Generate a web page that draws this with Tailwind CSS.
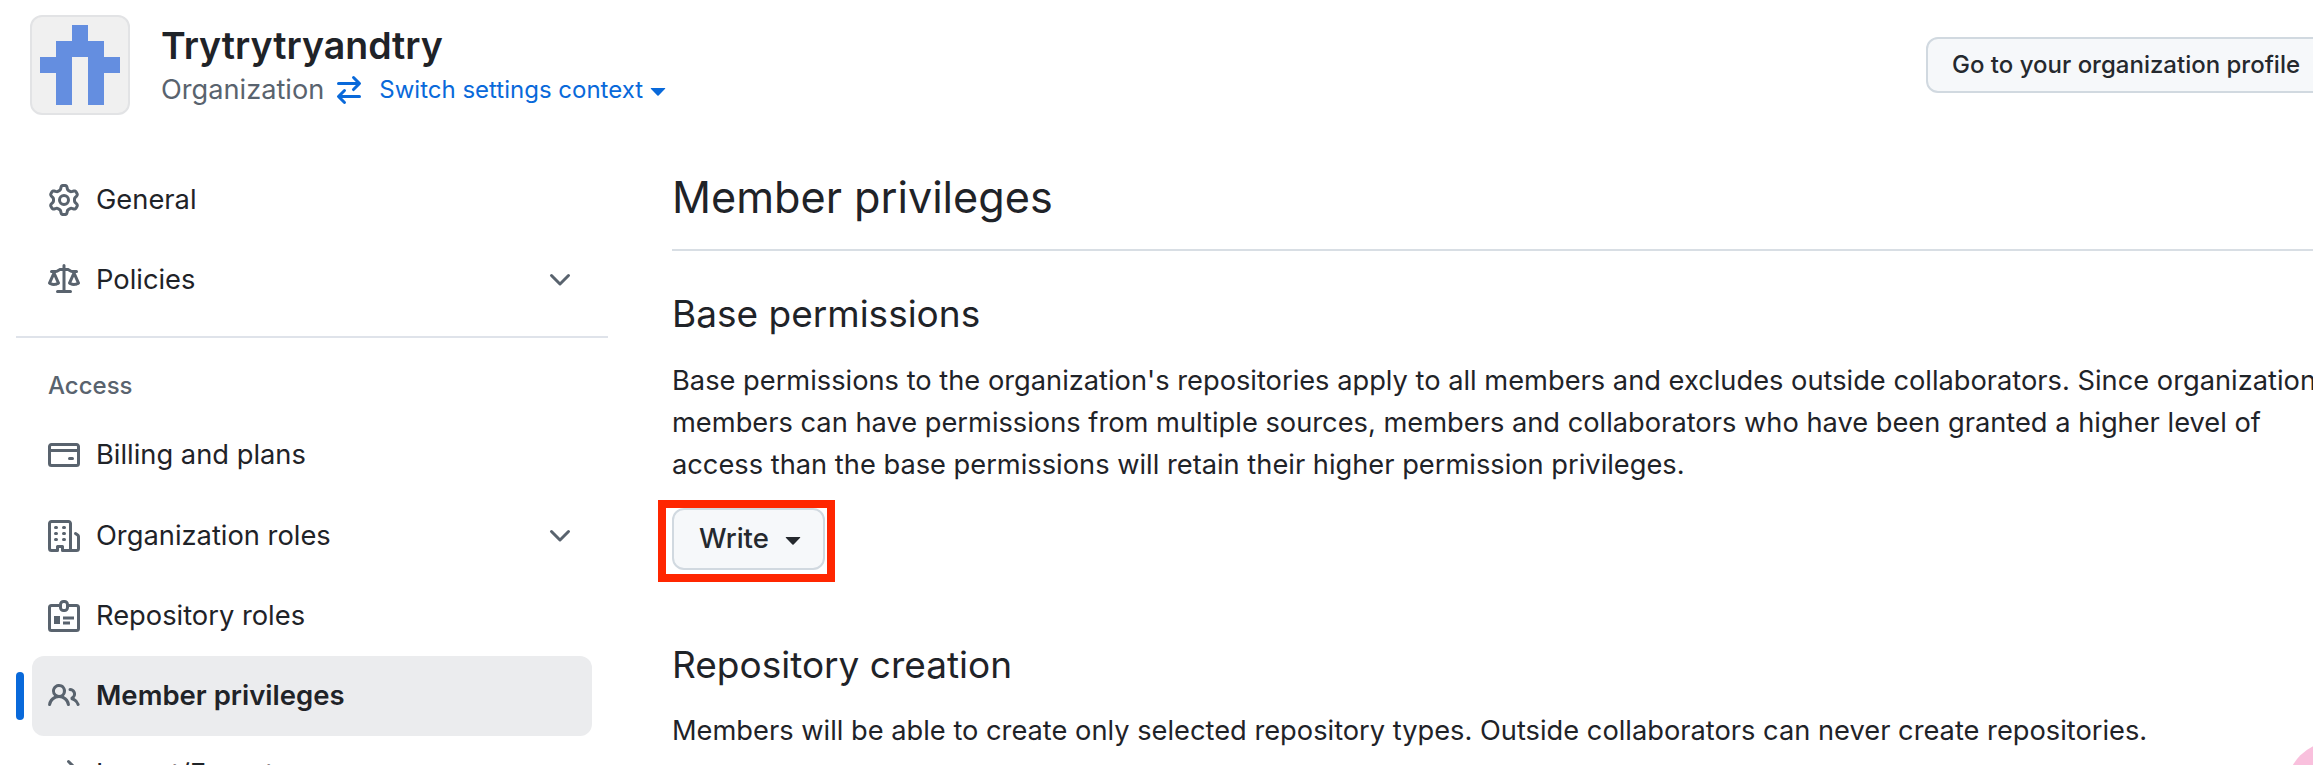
<!DOCTYPE html>
<html lang="en">
<head>
  <meta charset="UTF-8">
  <title>Member privileges</title>
  <script src="https://cdn.jsdelivr.net/npm/@tailwindcss/browser@4"></script>
</head>
<body class="bg-white font-['Inter',sans-serif] text-[#1f2328]">
<div class="relative h-[765px] w-[2313px] overflow-hidden">

  <!-- header -->
  <header class="flex h-[125px] items-start pl-[30px] pt-[15px]">
    <div class="flex h-[100px] w-[100px] shrink-0 items-center justify-center rounded-[12px] border-2 border-[#e2e3e5] bg-[#f0f0f0]">
      <svg width="80" height="80" viewBox="0 0 5 5" fill="#648ee0" shape-rendering="crispEdges">
        <path d="M2 0h1v1H2zM1 1h3v1H1zM0 2h2v1H0zM3 2h2v1H3zM1 3h1v2H1zM3 3h1v2H3z"/>
      </svg>
    </div>
    <div class="ml-[31px] flex flex-col">
      <h1 class="mt-[9px] text-[37.5px] leading-[44px] font-semibold">Trytrytryandtry</h1>
      <div class="mt-[4px] flex items-center text-[27.2px] leading-[36px]">
        <span class="text-[#59636e]">Organization</span>
        <svg class="ml-[9px]" width="32" height="32" viewBox="0 0 16 16" fill="#0969da"><path d="M5.22 14.78a.75.75 0 0 0 1.06-1.06L4.56 12h8.69a.75.75 0 0 0 0-1.5H4.56l1.72-1.72a.75.75 0 0 0-1.06-1.06l-3 3a.75.75 0 0 0 0 1.06l3 3Zm5.56-6.5a.75.75 0 1 1-1.06-1.06l1.72-1.72H2.75a.75.75 0 0 1 0-1.5h8.69L9.72 2.28a.75.75 0 0 1 1.06-1.06l3 3a.75.75 0 0 1 0 1.06l-3 3Z"/></svg>
        <a class="ml-[14px] text-[24px] text-[#0969da]">Switch settings context</a>
        <svg class="ml-[-1px]" width="32" height="32" viewBox="0 0 16 16" fill="#0969da"><path d="m4.427 7.427 3.396 3.396a.25.25 0 0 0 .354 0l3.396-3.396A.25.25 0 0 0 11.396 7H4.604a.25.25 0 0 0-.177.427Z"/></svg>
      </div>
    </div>
    <button class="ml-auto mr-[-33px] mt-[22px] h-[56px] w-[420px] shrink-0 rounded-[12px] border-2 border-[#d1d9e0] bg-[#f6f8fa] pl-[24px] text-left text-[24px] font-medium text-[#25292e]">Go to your organization profile</button>
  </header>

  <div class="flex">
    <!-- sidebar -->
    <nav class="ml-[16px] w-[592px] shrink-0 text-[27.3px]">
      <a class="mt-[45px] flex h-[60px] items-center pl-[32px]">
        <svg class="mr-[16px]" width="32" height="32" viewBox="0 0 16 16" fill="#59636e"><path d="M8 0a8.2 8.2 0 0 1 .701.031C9.444.095 9.99.645 10.16 1.29l.288 1.107c.018.066.079.158.212.224.231.114.454.243.668.386.123.082.233.09.299.071l1.103-.303c.644-.176 1.392.021 1.82.63.27.385.506.792.704 1.218.315.675.111 1.422-.364 1.891l-.814.806c-.049.048-.098.147-.088.294.016.257.016.515 0 .772-.01.147.038.246.088.294l.814.806c.475.469.679 1.216.364 1.891a7.977 7.977 0 0 1-.704 1.217c-.428.61-1.176.807-1.82.63l-1.102-.302c-.067-.019-.177-.011-.3.071a5.909 5.909 0 0 1-.668.386c-.133.066-.194.158-.211.224l-.29 1.106c-.168.646-.715 1.196-1.458 1.26a8.006 8.006 0 0 1-1.402 0c-.743-.064-1.289-.614-1.458-1.26l-.289-1.106c-.018-.066-.079-.158-.212-.224a5.738 5.738 0 0 1-.668-.386c-.123-.082-.233-.09-.299-.071l-1.103.303c-.644.176-1.392-.021-1.82-.63a8.12 8.12 0 0 1-.704-1.218c-.315-.675-.111-1.422.363-1.891l.815-.806c.05-.048.098-.147.088-.294a6.214 6.214 0 0 1 0-.772c.01-.147-.038-.246-.088-.294l-.815-.806C.635 6.045.431 5.298.746 4.623a7.92 7.92 0 0 1 .704-1.217c.428-.61 1.176-.807 1.82-.63l1.102.302c.067.019.177.011.3-.071.214-.143.437-.272.668-.386.133-.066.194-.158.211-.224l.29-1.106C6.009.645 6.556.095 7.299.03 7.53.01 7.764 0 8 0Zm-.571 1.525c-.036.003-.108.036-.137.146l-.289 1.105c-.147.561-.549.967-.998 1.189-.173.086-.34.183-.5.29-.417.278-.97.423-1.529.27l-1.103-.303c-.109-.03-.175.016-.195.045-.22.312-.412.644-.573.99-.014.031-.021.11.059.19l.815.806c.411.406.562.957.53 1.456a4.709 4.709 0 0 0 0 .582c.032.499-.119 1.05-.53 1.456l-.815.806c-.081.08-.073.159-.059.19.162.346.353.677.573.989.02.03.085.076.195.046l1.102-.303c.56-.153 1.113-.008 1.53.27.161.107.328.204.501.29.447.222.85.629.997 1.189l.289 1.105c.029.109.101.143.137.146a6.6 6.6 0 0 0 1.142 0c.036-.003.108-.036.137-.146l.289-1.105c.147-.561.549-.967.998-1.189.173-.086.34-.183.5-.29.417-.278.97-.423 1.529-.27l1.103.303c.109.029.175-.016.195-.045.22-.313.411-.644.573-.99.014-.031.021-.11-.059-.19l-.815-.806c-.411-.406-.562-.957-.53-1.456a4.709 4.709 0 0 0 0-.582c-.032-.499.119-1.05.53-1.456l.815-.806c.081-.08.073-.159.059-.19a6.464 6.464 0 0 0-.573-.989c-.02-.03-.085-.076-.195-.046l-1.102.303c-.56.153-1.113.008-1.53-.27a4.44 4.44 0 0 0-.501-.29c-.447-.222-.85-.629-.997-1.189l-.289-1.105c-.029-.11-.101-.143-.137-.146a6.6 6.6 0 0 0-1.142 0ZM11 8a3 3 0 1 1-6 0 3 3 0 0 1 6 0ZM9.5 8a1.5 1.5 0 1 0-3.001.001A1.5 1.5 0 0 0 9.5 8Z"/></svg>
        General
      </a>
      <a class="mt-[20px] flex h-[60px] items-center pl-[32px]">
        <svg class="mr-[16px]" width="32" height="32" viewBox="0 0 16 16" fill="#59636e"><path d="M8.75.75V2h.985c.304 0 .603.08.867.231l1.29.736c.038.022.08.033.124.033h2.234a.75.75 0 0 1 0 1.5h-.427l2.111 4.692a.75.75 0 0 1-.154.838l-.53-.53.529.531-.001.002-.002.002-.006.006-.006.005-.01.01-.045.04c-.21.176-.441.327-.686.45C14.556 10.78 13.88 11 13 11a4.498 4.498 0 0 1-2.023-.454 3.544 3.544 0 0 1-.686-.45l-.045-.04-.016-.015-.006-.006-.004-.004v-.001a.75.75 0 0 1-.154-.838L12.178 4.5h-.162c-.305 0-.604-.079-.868-.231l-1.29-.736a.245.245 0 0 0-.124-.033H8.75V13h2.5a.75.75 0 0 1 0 1.5h-6.5a.75.75 0 0 1 0-1.5h2.5V3.5h-.984a.245.245 0 0 0-.124.033l-1.289.737c-.265.15-.564.23-.869.23h-.162l2.112 4.692a.75.75 0 0 1-.154.838l-.53-.53.529.531-.001.002-.002.002-.006.006-.016.015-.045.04c-.21.176-.441.327-.686.45C4.556 10.78 3.88 11 3 11a4.498 4.498 0 0 1-2.023-.454 3.544 3.544 0 0 1-.686-.45l-.045-.04-.016-.015-.006-.006-.004-.004v-.001a.75.75 0 0 1-.154-.838L2.178 4.5H1.75a.75.75 0 0 1 0-1.5h2.234a.249.249 0 0 0 .125-.033l1.288-.737c.265-.15.564-.23.869-.23h.984V.75a.75.75 0 0 1 1.5 0Zm2.945 8.477c.285.135.718.273 1.305.273s1.02-.138 1.305-.273L13 6.327Zm-10 0c.285.135.718.273 1.305.273s1.02-.138 1.305-.273L3 6.327Z"/></svg>
        Policies
        <svg class="ml-auto mr-[32px]" width="32" height="32" viewBox="0 0 16 16" fill="#59636e"><path d="M12.78 5.22a.749.749 0 0 1 0 1.06l-4.25 4.25a.749.749 0 0 1-1.06 0L3.22 6.28a.749.749 0 1 1 1.06-1.06L8 8.939l3.72-3.719a.749.749 0 0 1 1.06 0Z"/></svg>
      </a>
      <div class="mt-[26px] h-[2px] bg-[#dfe3ea]"></div>
      <div class="mt-[34px] pl-[32px] text-[24px] leading-[28px] font-medium text-[#59636e]">Access</div>
      <a class="mt-[25px] flex h-[60px] items-center pl-[32px]">
        <svg class="mr-[16px]" width="32" height="32" viewBox="0 0 16 16" fill="#59636e"><path d="M10.75 9a.75.75 0 0 0 0 1.5h1.5a.75.75 0 0 0 0-1.5h-1.5Z"/><path d="M0 3.75C0 2.784.784 2 1.75 2h12.5c.966 0 1.75.784 1.75 1.75v8.5A1.75 1.75 0 0 1 14.25 14H1.75A1.75 1.75 0 0 1 0 12.25ZM14.5 6.5h-13v5.75c0 .138.112.25.25.25h12.5a.25.25 0 0 0 .25-.25Zm0-2.75a.25.25 0 0 0-.25-.25H1.75a.25.25 0 0 0-.25.25V5h13Z"/></svg>
        Billing and plans
      </a>
      <a class="mt-[21px] flex h-[60px] items-center pl-[32px]">
        <svg class="mr-[16px]" width="32" height="32" viewBox="0 0 16 16" fill="#59636e"><path d="M1.75 16A1.75 1.75 0 0 1 0 14.25V1.75C0 .784.784 0 1.75 0h8.5C11.216 0 12 .784 12 1.75v12.5c0 .085-.006.168-.018.25h2.268a.25.25 0 0 0 .25-.25V8.285a.25.25 0 0 0-.111-.208l-1.055-.703a.749.749 0 1 1 .832-1.248l1.055.703c.487.325.779.871.779 1.456v5.965A1.75 1.75 0 0 1 14.25 16h-3.5a.766.766 0 0 1-.197-.026c-.099.017-.2.026-.303.026h-3a.75.75 0 0 1-.75-.75V14h-1v1.25a.75.75 0 0 1-.75.75Zm-.25-1.75c0 .138.112.25.25.25H4v-1.25a.75.75 0 0 1 .75-.75h2.5a.75.75 0 0 1 .75.75v1.25h2.25a.25.25 0 0 0 .25-.25V1.75a.25.25 0 0 0-.25-.25h-8.5a.25.25 0 0 0-.25.25ZM3.75 6h.5a.75.75 0 0 1 0 1.5h-.5a.75.75 0 0 1 0-1.5ZM3 3.75A.75.75 0 0 1 3.75 3h.5a.75.75 0 0 1 0 1.5h-.5A.75.75 0 0 1 3 3.75Zm4 3A.75.75 0 0 1 7.75 6h.5a.75.75 0 0 1 0 1.5h-.5A.75.75 0 0 1 7 6.75ZM7.75 3h.5a.75.75 0 0 1 0 1.5h-.5a.75.75 0 0 1 0-1.5ZM3 9.75A.75.75 0 0 1 3.75 9h.5a.75.75 0 0 1 0 1.5h-.5A.75.75 0 0 1 3 9.75ZM7.75 9h.5a.75.75 0 0 1 0 1.5h-.5a.75.75 0 0 1 0-1.5Z"/></svg>
        Organization roles
        <svg class="ml-auto mr-[32px]" width="32" height="32" viewBox="0 0 16 16" fill="#59636e"><path d="M12.78 5.22a.749.749 0 0 1 0 1.06l-4.25 4.25a.749.749 0 0 1-1.06 0L3.22 6.28a.749.749 0 1 1 1.06-1.06L8 8.939l3.72-3.719a.749.749 0 0 1 1.06 0Z"/></svg>
      </a>
      <a class="mt-[20px] flex h-[60px] items-center pl-[32px]">
        <svg class="mr-[16px]" width="32" height="32" viewBox="0 0 16 16" fill="none" stroke="#59636e" stroke-width="1.5"><path d="M6 2.75H1.75a1 1 0 0 0-1 1v10.5a1 1 0 0 0 1 1h12.5a1 1 0 0 0 1-1V3.75a1 1 0 0 0-1-1H10"/><rect x="6.25" y=".75" width="3.5" height="4.5" rx="1.5"/><path fill="#59636e" stroke="none" d="M3 8h3v4H3zM7.5 8.25h5.5v1.5H7.5zM7.5 10.75h3.5v1.5H7.5z"/></svg>
        Repository roles
      </a>
      <div class="relative mt-[10px]">
        <span class="absolute left-0 top-[16px] h-[48px] w-[8px] rounded-full bg-[#0969da]"></span>
        <a class="ml-[16px] flex h-[80px] w-[560px] items-center rounded-[12px] bg-[#ebecee] pl-[16px] text-[27.5px] font-semibold">
          <svg class="mr-[16px]" width="32" height="32" viewBox="0 0 16 16" fill="#59636e"><path d="M2 5.5a3.5 3.5 0 1 1 5.898 2.549 5.508 5.508 0 0 1 3.034 4.084.75.75 0 1 1-1.482.235 4 4 0 0 0-7.9 0 .75.75 0 0 1-1.482-.236A5.507 5.507 0 0 1 3.102 8.05 3.493 3.493 0 0 1 2 5.5ZM11 4a3.001 3.001 0 0 1 2.22 5.018 5.01 5.01 0 0 1 2.56 3.012.749.749 0 0 1-.885.954.752.752 0 0 1-.549-.514 3.507 3.507 0 0 0-2.522-2.372.75.75 0 0 1-.574-.73v-.352a.75.75 0 0 1 .416-.672A1.5 1.5 0 0 0 11 5.5.75.75 0 0 1 11 4Zm-5.5-.5a2 2 0 1 0-.001 3.999A2 2 0 0 0 5.5 3.5Z"/></svg>
          Member privileges
        </a>
      </div>
      <a class="flex h-[76px] items-center pl-[32px]">
        <svg class="mr-[16px]" width="32" height="32" viewBox="0 0 16 16" fill="#59636e"><path d="M5.22 14.78a.75.75 0 0 0 1.06-1.06L4.56 12h8.69a.75.75 0 0 0 0-1.5H4.56l1.72-1.72a.75.75 0 0 0-1.06-1.06l-3 3a.75.75 0 0 0 0 1.06l3 3Zm5.56-6.5a.75.75 0 1 1-1.06-1.06l1.72-1.72H2.75a.75.75 0 0 1 0-1.5h8.69L9.72 2.28a.75.75 0 0 1 1.06-1.06l3 3a.75.75 0 0 1 0 1.06l-3 3Z"/></svg>
        Import/Export
      </a>
    </nav>

    <!-- main -->
    <main class="ml-[64px] w-[1800px] shrink-0">
      <h2 class="mt-[47px] border-b-2 border-[#d8dee4] pb-[27px] text-[43.2px] leading-[50px]">Member privileges</h2>
      <h3 class="mt-[41px] text-[37px] leading-[44px]">Base permissions</h3>
      <p class="mt-[24px] whitespace-nowrap text-[27.25px] leading-[42px]">
        Base permissions to the organization's repositories apply to all members and excludes outside collaborators. Since organizations<br>
        members can have permissions from multiple sources, members and collaborators who have been granted a higher level of<br>
        access than the base permissions will retain their higher permission privileges.
      </p>
      <div class="relative mt-[22px] h-[62px] w-[153px]">
        <button class="flex h-[62px] w-[153px] items-center rounded-[12px] border-2 border-[#d1d9e0] bg-[#f6f8fa] pl-[25px] text-[27.5px] font-medium text-[#25292e]">
          Write
          <svg class="ml-[8px]" width="32" height="32" viewBox="0 0 16 16" fill="#25292e"><path d="m4.427 7.427 3.396 3.396a.25.25 0 0 0 .354 0l3.396-3.396A.25.25 0 0 0 11.396 7H4.604a.25.25 0 0 0-.177.427Z"/></svg>
        </button>
        <div class="absolute left-[-14px] top-[-8px] h-[82px] w-[177px] border-[8px] border-[#ff2600]"></div>
      </div>
      <h3 class="mt-[73px] text-[37px] leading-[44px]">Repository creation</h3>
      <p class="mt-[23px] whitespace-nowrap text-[27.25px] leading-[42px]">Members will be able to create only selected repository types. Outside collaborators can never create repositories.</p>
    </main>
  </div>

  <!-- pink corner blob -->
  <div class="absolute left-[2286px] top-[741px] h-[98px] w-[98px] rounded-full bg-[#f9c0dd]"></div>
</div>
</body>
</html>
